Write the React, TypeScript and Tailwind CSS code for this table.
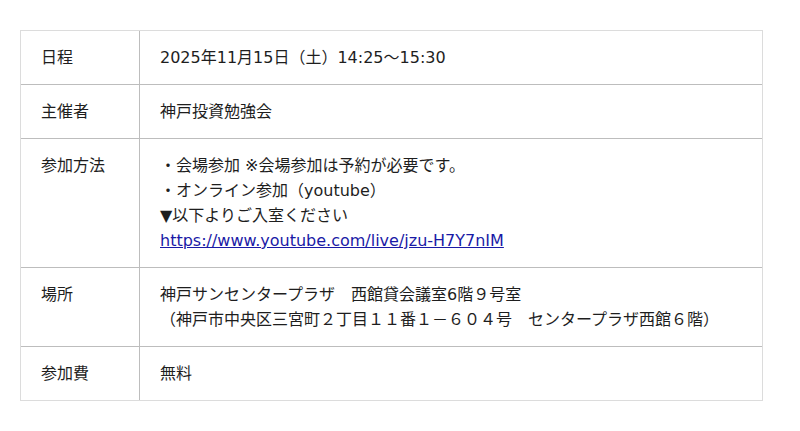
const rows: { label: string; body: React.ReactNode }[] = [
  { label: "日程", body: "2025年11月15日（土）14:25〜15:30" },
  { label: "主催者", body: "神戸投資勉強会" },
  {
    label: "参加方法",
    body: (
      <>
        <div>・会場参加 ※会場参加は予約が必要です。</div>
        <div>・オンライン参加（youtube）</div>
        <div>▼以下よりご入室ください</div>
        <div>
          <a href="#" className="text-[#1a1aa6] underline">
            https://www.youtube.com/live/jzu-H7Y7nIM
          </a>
        </div>
      </>
    ),
  },
  {
    label: "場所",
    body: (
      <>
        <div>神戸サンセンタープラザ　西館貸会議室6階９号室</div>
        <div>（神戸市中央区三宮町２丁目１１番１－６０４号　センタープラザ西館６階）</div>
      </>
    ),
  },
  { label: "参加費", body: "無料" },
];

export default function App() {
  return (
    <div className="min-h-[431px] bg-white pt-[30px] pl-5 font-['DejaVu_Sans','Noto_Sans_CJK_JP',sans-serif] text-[16px] leading-[25px] text-[#1e1e1e]">
      <div className="w-[743px] border border-[#dcdcdc]">
        {rows.map((r, i) => (
          <div
            key={r.label}
            className={`flex ${i > 0 ? "border-t border-[#bdbdbd]" : ""}`}
          >
            <div className="w-[119px] shrink-0 border-r border-[#bdbdbd] px-5 py-[14px]">
              {r.label}
            </div>
            <div className="flex-1 px-5 py-[14px]">{r.body}</div>
          </div>
        ))}
      </div>
    </div>
  );
}
